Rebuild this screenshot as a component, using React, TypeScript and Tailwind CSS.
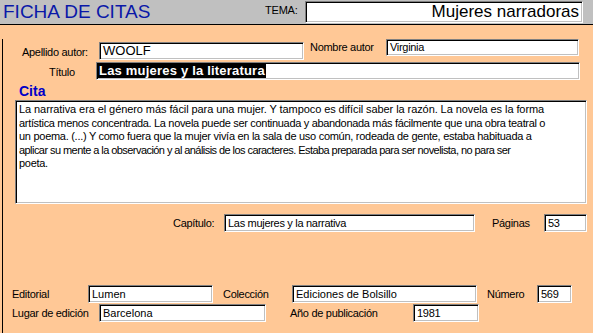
import React from 'react';

type FieldProps = {
    value: string;
    width: string;
    className?: string;
    textClass?: string;
};

const sunken =
    'bg-white border border-t-[#808080] border-l-[#808080] border-b-white border-r-white shadow-[inset_1px_1px_0_#000,inset_-1px_-1px_0_#c0c0c0]';

// campo de texto estilo Access 95
const Field = (props: FieldProps) => {
    return (
        <div className={`${sunken} ${props.width} ${props.className ?? ''} flex items-center pl-[3px] overflow-hidden`}>
            <span className={`whitespace-nowrap text-black ${props.textClass ?? 'text-[11px]'}`}>{props.value}</span>
        </div>
    );
};

const Label = ({ text, className }: { text: string; className: string }) => (
    <div className={`text-[11px] leading-[12px] tracking-[-0.3px] text-black whitespace-nowrap ${className}`}>{text}</div>
);

// cada línea con su propio espaciado para que acabe donde en el original
const citaLines = [
    { text: 'La narrativa era el género más fácil para una mujer. Y tampoco es difícil saber la razón. La novela es la forma', cls: 'tracking-[-0.08px]' },
    { text: 'artística menos concentrada. La novela puede ser continuada y abandonada más fácilmente que una obra teatral o', cls: 'tracking-[-0.32px]' },
    { text: 'un poema. (...) Y como fuera que la mujer vivía en la sala de uso común, rodeada de gente, estaba habituada a', cls: 'tracking-[-0.28px]' },
    { text: 'aplicar su mente a la observación y al análisis de los caracteres. Estaba preparada para ser novelista, no para ser', cls: 'tracking-[-0.56px]' },
    { text: 'poeta.', cls: 'tracking-[-0.3px]' },
];

export default function App() {
    return (
        <div className="w-[593px] h-[333px] overflow-hidden bg-[#ffc896]" style={{ fontFamily: '"Liberation Sans", Arial, sans-serif' }}>
            {/* cabecera */}
            <div className="h-[25px] bg-[#c0c0c0] border-b border-black flex items-start">
                <div className="w-[265px] pl-[3px] pt-[1px] text-[19px] leading-[22px] text-[#0a18a8]">FICHA DE CITAS</div>
                <div className="w-[40px] pt-[4px] text-[11px] leading-[12px] tracking-[-0.2px] text-black">TEMA:</div>
                <div className={`${sunken} w-[278px] h-[22px] mt-[1px] flex items-center justify-end pr-[3px]`}>
                    <span className="text-[17px] leading-[20px] text-black whitespace-nowrap">Mujeres narradoras</span>
                </div>
            </div>

            {/* cuerpo */}
            <div className="ml-[2px] border-l border-black h-[308px]">
                <div className="flex items-start mt-[14px]">
                    <Label text="Apellido autor:" className="ml-[19px] w-[77px] mt-[7px]" />
                    <Field value="WOOLF" width="w-[205px]" className="h-[18px] mt-[3px]" textClass="text-[13px] leading-[14px]" />
                    <Label text="Nombre autor" className="ml-[6px] w-[76px] mt-[2px]" />
                    <Field value="Virginia" width="w-[193px]" className="h-[17px]" textClass="text-[11px] tracking-[-0.3px]" />
                </div>

                <div className="flex items-start mt-[2px]">
                    <Label text="Título" className="ml-[46px] w-[47px] mt-[4px]" />
                    <div className={`${sunken} w-[484px] h-[18px] flex items-stretch pl-[1px] py-[1px]`}>
                        <span className="bg-black text-white font-bold text-[13px] leading-[14px] tracking-[0.2px] px-[1px] whitespace-nowrap">
                            Las mujeres y la literatura
                        </span>
                    </div>
                </div>

                <div className="ml-[16px] mt-[3px] h-[17px] text-[14px] leading-[17px] font-bold text-[#0000c8]">Cita</div>

                <div className={`${sunken} ml-[12px] w-[572px] h-[104px] pl-[3px] pt-[2px]`}>
                    {citaLines.map((line, i) => (
                        <div key={i} className={`text-[11px] leading-[13.5px] text-black whitespace-nowrap ${line.cls}`}>{line.text}</div>
                    ))}
                </div>

                <div className="flex items-center mt-[10px]">
                    <Label text="Capítulo:" className="ml-[170px] w-[51px]" />
                    <Field value="Las mujeres y la narrativa" width="w-[251px]" className="h-[18px]" textClass="text-[11px] tracking-[-0.3px]" />
                    <Label text="Páginas" className="ml-[17px] w-[52px]" />
                    <Field value="53" width="w-[43px]" className="h-[18px]" textClass="text-[11px] tracking-[-0.3px]" />
                </div>

                <div className="flex items-center mt-[53px]">
                    <Label text="Editorial" className="ml-[9px] w-[76px]" />
                    <Field value="Lumen" width="w-[125px]" className="h-[18px]" />
                    <Label text="Colección" className="ml-[10px] w-[69px]" />
                    <Field value="Ediciones de Bolsillo" width="w-[185px]" className="h-[18px]" />
                    <Label text="Número" className="ml-[10px] w-[50px]" />
                    <Field value="569" width="w-[35px]" className="h-[18px]" textClass="text-[11px] tracking-[-0.3px]" />
                </div>

                <div className="flex items-center mt-[1px]">
                    <Label text="Lugar de edición" className="ml-[9px] w-[87px]" />
                    <Field value="Barcelona" width="w-[167px]" className="h-[18px]" />
                    <Label text="Año de publicación" className="ml-[24px] w-[123px]" />
                    <Field value="1981" width="w-[66px]" className="h-[18px]" textClass="text-[11px] tracking-[-0.3px]" />
                </div>
            </div>
        </div>
    );
}
